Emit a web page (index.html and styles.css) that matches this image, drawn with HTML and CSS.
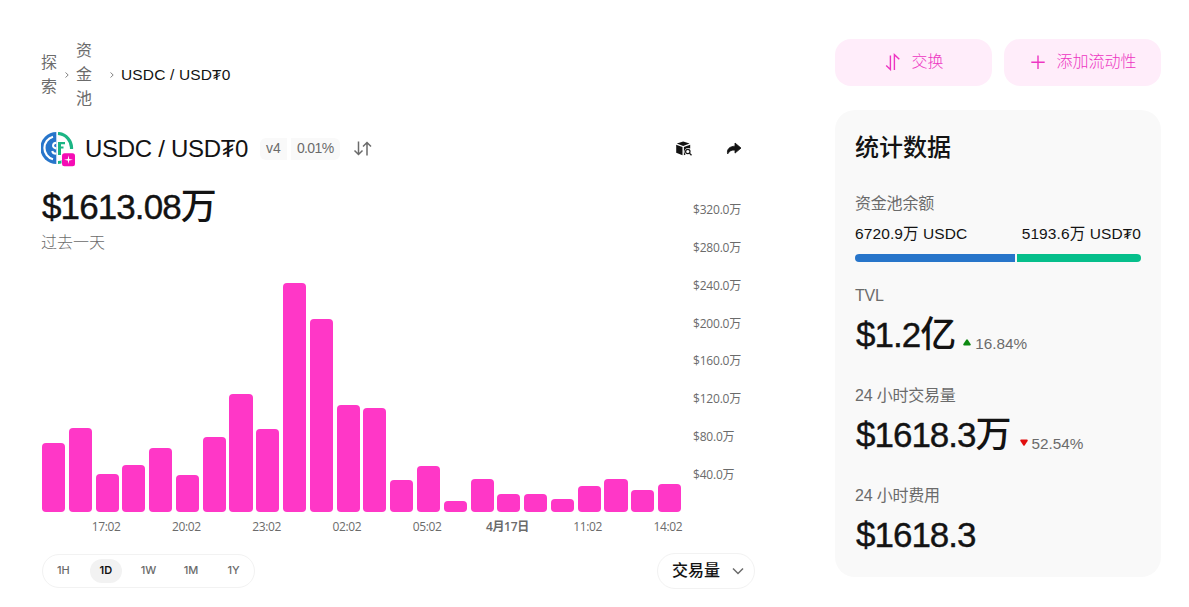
FILE: index.html
```html
<!DOCTYPE html>
<html lang="zh-CN">
<head>
    <meta charset="UTF-8">
    <meta name="viewport" content="width=device-width, initial-scale=1.0">
    <title>USDC / USD₮0</title>
    <link rel="stylesheet" href="styles.css">
</head>
<body>
    <div class="page">
        <main class="main">
            <nav class="breadcrumb">
                <a class="crumb-explore">探索</a>
                <svg class="crumb-arrow" width="6" height="8" viewBox="0 0 6 8"><path d="M1.5 1.5L4.2 4L1.5 6.5"/></svg>
                <a class="crumb-pools">资金池</a>
                <svg class="crumb-arrow" width="6" height="8" viewBox="0 0 6 8"><path d="M1.5 1.5L4.2 4L1.5 6.5"/></svg>
                <span class="crumb-current">USDC / USD₮0</span>
            </nav>

            <header class="pool-header">
                <div class="pool-logo">
                    <svg width="36" height="36" viewBox="0 0 36 36">
                        <!-- USDC -->
                        <path d="M15.3 0A16 16 0 0 0 15.3 32Z" fill="#2775ca"/>
                        <path d="M12 4.8A11.6 11.6 0 0 0 12 27.2" fill="none" stroke="#fff" stroke-width="2.2"/>
                        <path d="M15.3 10.7C11.5 10.8 11 15 14 16L15.3 16.5M11.2 19C11.5 20.8 13 21.7 15.3 21.8" fill="none" stroke="#fff" stroke-width="2"/>
                        <!-- USDT0 -->
                        <path d="M17 1.5A14.5 14.5 0 0 1 30.5 17" fill="none" stroke="#1bb584" stroke-width="3.2"/>
                        <path d="M17 30.5C19 30.5 21 30 22 29.3" fill="none" stroke="#1bb584" stroke-width="3.2"/>
                        <path d="M17 10H24V12.2H20V14.5H22.5V16.5H20V23H17Z" fill="#1bb584"/>
                        <rect x="20.5" y="21" width="14" height="13.5" rx="2.5" fill="#fff"/>
                        <rect x="21" y="21.2" width="13" height="13" rx="2.5" fill="#f50db4"/>
                        <path d="M27.5 23.3L28.2 27L32 27.7L28.2 28.4L27.5 32.1L26.8 28.4L23 27.7L26.8 27Z" fill="#fff"/>
                    </svg>
                </div>
                <h1>USDC / USD₮0</h1>
                <div class="badges">
                    <span class="badge badge-version">v4</span>
                    <span class="badge badge-fee">0.01%</span>
                </div>
                <svg class="reverse" width="20" height="18" viewBox="0 0 20 18"><path d="M5.5 1.5V14.5M1.5 10.5L5.5 14.5L9.5 10.5M14 15.5V2.5M10 6.5L14 2.5L18 6.5"/></svg>
                <div class="header-actions">
                    <svg width="18" height="18" viewBox="0 0 18 18">
                        <path d="M8.2 1.4L14.6 3.6L8.2 6.1L1.8 3.6Z" fill="#131313"/>
                        <path d="M1.2 4.7L7.5 7V15.3L1.2 12.8Z" fill="#131313"/>
                        <path d="M8.9 7L15.2 4.7V8.6C12.7 6.9 9.4 8.6 9.4 11.6C9.4 12.8 9.9 13.8 10.6 14.5L8.9 15.2Z" fill="#131313"/>
                        <circle cx="12.8" cy="11.5" r="2.2" fill="none" stroke="#131313" stroke-width="1.2"/>
                        <path d="M14.4 13.1L16.5 15.2" stroke="#131313" stroke-width="1.3"/>
                    </svg>
                    <svg width="16" height="18" viewBox="0 0 16 18"><path d="M9 3L15 8.1L9 13.1V10.1C5.5 9.8 3.3 11 1.7 13.9C.4 9.8 3.4 6.2 9 6.2Z" fill="#131313" stroke="#131313" stroke-width=".8" stroke-linejoin="round"/></svg>
                </div>
            </header>

            <section class="chart">
                <div class="chart-left">
                    <div class="price">$1613.08<span class="cjk">万</span></div>
                    <div class="period">过去一天</div>
                    <div class="bars">
                        <div class="bar" style="height: 69px"></div>
                        <div class="bar" style="height: 84px"></div>
                        <div class="bar" style="height: 38px"></div>
                        <div class="bar" style="height: 47px"></div>
                        <div class="bar" style="height: 64px"></div>
                        <div class="bar" style="height: 37px"></div>
                        <div class="bar" style="height: 75px"></div>
                        <div class="bar" style="height: 118px"></div>
                        <div class="bar" style="height: 83px"></div>
                        <div class="bar" style="height: 229px"></div>
                        <div class="bar" style="height: 193px"></div>
                        <div class="bar" style="height: 107px"></div>
                        <div class="bar" style="height: 104px"></div>
                        <div class="bar" style="height: 32px"></div>
                        <div class="bar" style="height: 46px"></div>
                        <div class="bar" style="height: 11px"></div>
                        <div class="bar" style="height: 33px"></div>
                        <div class="bar" style="height: 18px"></div>
                        <div class="bar" style="height: 18px"></div>
                        <div class="bar" style="height: 13px"></div>
                        <div class="bar" style="height: 26px"></div>
                        <div class="bar" style="height: 33px"></div>
                        <div class="bar" style="height: 22px"></div>
                        <div class="bar" style="height: 28px"></div>
                    </div>
                    <div class="x-axis">
                        <span>17:02</span>
                        <span>20:02</span>
                        <span>23:02</span>
                        <span>02:02</span>
                        <span>05:02</span>
                        <span class="day">4月17日</span>
                        <span>11:02</span>
                        <span>14:02</span>
                    </div>
                </div>
                <div class="y-axis">
                    <span>$320.0万</span>
                    <span>$280.0万</span>
                    <span>$240.0万</span>
                    <span>$200.0万</span>
                    <span>$160.0万</span>
                    <span>$120.0万</span>
                    <span>$80.0万</span>
                    <span>$40.0万</span>
                </div>
            </section>

            <footer class="controls">
                <div class="ranges">
                    <span class="range">1H</span>
                    <span class="range active">1D</span>
                    <span class="range">1W</span>
                    <span class="range">1M</span>
                    <span class="range">1Y</span>
                </div>
                <div class="select">
                    <span>交易量</span>
                    <svg width="14" height="10" viewBox="0 0 14 10"><path d="M2 2.5L7 7.5L12 2.5"/></svg>
                </div>
            </footer>
        </main>

        <aside class="side">
            <div class="actions">
                <button class="action">
                    <svg width="16" height="18" viewBox="0 0 16 18"><path d="M1.2 12.5L5.4 16.5V2.5M9.4 17V1.7L14.3 6.3"/></svg>
                    <span>交换</span>
                </button>
                <button class="action action-add">
                    <svg width="16" height="18" viewBox="0 0 16 18"><path d="M8 2.5V16M1.3 9.3H14.7"/></svg>
                    <span>添加流动性</span>
                </button>
            </div>

            <div class="stats">
                <h2>统计数据</h2>
                <div class="label label-balance">资金池余额</div>
                <div class="balances">
                    <span>6720.9万 USDC</span>
                    <span>5193.6万 USD₮0</span>
                </div>
                <div class="balance-bar">
                    <div class="usdc" style="width: 160px"></div>
                    <div class="usdt"></div>
                </div>
                <div class="stat">
                    <div class="label">TVL</div>
                    <div class="value">
                        <span class="number">$1.2<span class="cjk">亿</span></span>
                        <svg class="up" width="8" height="7" viewBox="0 0 8 7"><path d="M3.2 .7Q4 -.3 4.8 .7L7.6 5Q8.2 6.6 6.8 6.6H1.2Q-.2 6.6 .4 5Z"/></svg>
                        <span class="delta">16.84%</span>
                    </div>
                </div>
                <div class="stat">
                    <div class="label">24 小时交易量</div>
                    <div class="value">
                        <span class="number">$1618.3<span class="cjk">万</span></span>
                        <svg class="down" width="8" height="7" viewBox="0 0 8 7"><path d="M3.2 6.3Q4 7.3 4.8 6.3L7.6 2Q8.2 .4 6.8 .4H1.2Q-.2 .4 .4 2Z"/></svg>
                        <span class="delta">52.54%</span>
                    </div>
                </div>
                <div class="stat">
                    <div class="label">24 小时费用</div>
                    <div class="value">
                        <span class="number">$1618.3</span>
                    </div>
                </div>
            </div>
        </aside>
    </div>
</body>
</html>
```
FILE: styles.css
```css
* {
    box-sizing: border-box;
}
body {
    margin: 0;
    background: #ffffff;
    color: #131313;
    font-family: "Liberation Sans", "Noto Sans CJK SC", sans-serif;
    font-size: 16px;
    overflow: hidden;
}
svg {
    display: block;
    flex: none;
}
.page {
    display: flex;
    gap: 80px;
    width: 1161px;
    height: 607px;
    padding: 38px 0 0 41px;
}
.main {
    width: 714px;
    flex: none;
}

/* Breadcrumb */
.breadcrumb {
    display: flex;
    align-items: center;
    height: 72px;
    margin-top: 1px;
    line-height: 24px;
    color: #6b6b6b;
}
.crumb-explore {
    width: 16px;
    margin-right: 7px;
}
.crumb-pools {
    width: 16px;
    margin: 0 17px 0 6px;
}
.crumb-arrow {
    fill: none;
    stroke: #858585;
    stroke-width: 1;
}
.crumb-current {
    margin-left: 6px;
    color: #131313;
    font-size: 15.5px;
    letter-spacing: 0.15px;
    white-space: nowrap;
}

/* Pool header */
.pool-header {
    display: flex;
    align-items: center;
    height: 36px;
    margin-top: 20px;
}
.pool-logo {
    width: 36px;
    height: 36px;
    margin-top: 2px;
}
h1 {
    margin: 0 0 0 8px;
    font-size: 24px;
    font-weight: 400;
    line-height: 32px;
    letter-spacing: -0.3px;
    white-space: nowrap;
}
.badges {
    display: flex;
    gap: 4px;
    margin-left: 12px;
}
.badge {
    height: 22px;
    padding: 0 6px;
    background: #f9f9f9;
    color: #6b6b6b;
    font-size: 14px;
    line-height: 20px;
}
.badge-version {
    border-radius: 6px 0 0 6px;
}
.badge-fee {
    border-radius: 0 6px 6px 0;
    letter-spacing: -0.6px;
}
.reverse {
    margin-left: 13px;
    fill: none;
    stroke: #6b6b6b;
    stroke-width: 1.5;
}
.header-actions {
    display: flex;
    gap: 33px;
    margin: 0 13px 0 auto;
}

/* Chart */
.chart {
    display: flex;
    height: 368px;
}
.chart-left {
    width: 652px;
}
.price {
    height: 48px;
    margin-top: 16px;
    padding-left: 1px;
    font-size: 35px;
    line-height: 48px;
    letter-spacing: -0.9px;
    white-space: nowrap;
    -webkit-text-stroke: 0.4px #131313;
}
.cjk {
    font-size: 36px;
    letter-spacing: 0;
    -webkit-text-stroke: 0;
    font-weight: 500;
}
.period {
    height: 24px;
    color: #6b6b6b;
    font-weight: 300;
    line-height: 24px;
}
.bars {
    display: flex;
    align-items: flex-end;
    gap: 3.7px;
    width: 641px;
    height: 257px;
    padding: 0 1px;
}
.bar {
    flex: 1;
    background: #ff37c7;
    border-radius: 4px;
}
.x-axis {
    display: flex;
    width: 642px;
    margin: 6px 0 0 25px;
    letter-spacing: -0.35px;
}
.x-axis span {
    flex: 1;
    text-align: center;
}
.x-axis,
.y-axis {
    color: #6b6b6b;
    font-family: "Open Sans", "Noto Sans CJK SC", sans-serif;
    font-size: 12px;
    line-height: 18px;
}
.x-axis .day {
    font-weight: 600;
}
.y-axis {
    display: flex;
    flex-direction: column;
    gap: 19.85px;
    margin-top: 34px;
    white-space: nowrap;
}
.y-axis span {
    height: 18px;
    letter-spacing: -0.2px;
}

/* Controls */
.controls {
    display: flex;
    justify-content: space-between;
    align-items: center;
    height: 36px;
    margin-top: 18px;
}
.ranges {
    display: flex;
    gap: 10px;
    width: 213px;
    height: 34px;
    margin-left: 1px;
    padding: 4px;
    border: 1px solid #f2f2f2;
    border-radius: 17px;
}
.range {
    flex: 1;
    height: 24px;
    border-radius: 12px;
    color: #6b6b6b;
    font-family: Inter, sans-serif;
    font-size: 11px;
    font-weight: 500;
    line-height: 22px;
    text-align: center;
}
.range.active {
    background: #f2f2f2;
    color: #131313;
    font-weight: 600;
}
.select {
    display: flex;
    align-items: center;
    gap: 11px;
    width: 98px;
    height: 36px;
    padding: 0 0 1px 14px;
    border: 1px solid #f2f2f2;
    border-radius: 18px;
    font-weight: 500;
    white-space: nowrap;
}
.select span {
    padding-bottom: 3px;
}
.select svg {
    fill: none;
    stroke: #6b6b6b;
    stroke-width: 1.5;
}

/* Side column */
.side {
    width: 326px;
    flex: none;
}
.actions {
    display: flex;
    gap: 12px;
    margin-top: 1px;
}
.action {
    display: flex;
    flex: 1;
    justify-content: center;
    align-items: center;
    gap: 10px;
    height: 47px;
    padding: 0 0 2px 2px;
    border: none;
    border-radius: 16px;
    background: #ffedfa;
    color: #ed35c2;
    font: 300 16px "Noto Sans CJK SC", sans-serif;
    white-space: nowrap;
}
.action span {
    padding-bottom: 3px;
}
.action svg {
    fill: none;
    stroke: #ed35c2;
    stroke-width: 1.4;
}
.stats {
    height: 467px;
    margin-top: 24px;
    padding: 21px 20px 20px;
    border-radius: 20px;
    background: #f9f9f9;
}
h2 {
    margin: 0;
    font-size: 24px;
    font-weight: 500;
    line-height: 34px;
}
.label {
    height: 24px;
    color: #6b6b6b;
    font-size: 16px;
    line-height: 24px;
    letter-spacing: -0.2px;
}
.label-balance {
    margin-top: 27px;
}
.balances {
    display: flex;
    justify-content: space-between;
    margin-top: 6px;
    font-size: 15.5px;
    line-height: 24px;
    letter-spacing: 0.1px;
}
.balance-bar {
    display: flex;
    gap: 2px;
    height: 8px;
    margin-top: 8px;
}
.usdc {
    background: #2775ca;
    border-radius: 4px 0 0 4px;
}
.usdt {
    flex: 1;
    background: #06bf8b;
    border-radius: 0 4px 4px 0;
}
.stat {
    height: 78px;
    margin-top: 22px;
}
.stat .value {
    display: flex;
    align-items: flex-end;
    height: 53px;
}
.number {
    padding-left: 1px;
    font-size: 35px;
    line-height: 52px;
    letter-spacing: -1px;
    -webkit-text-stroke: 0.4px #131313;
}
.up,
.down {
    margin: 0 4px 15px 7px;
}
.up {
    fill: #0c8911;
}
.down {
    margin-left: 8px;
    fill: #e10f0f;
}
.delta {
    height: 24px;
    margin-bottom: 5px;
    color: #6b6b6b;
    font-size: 15.3px;
    line-height: 24px;
}
```
